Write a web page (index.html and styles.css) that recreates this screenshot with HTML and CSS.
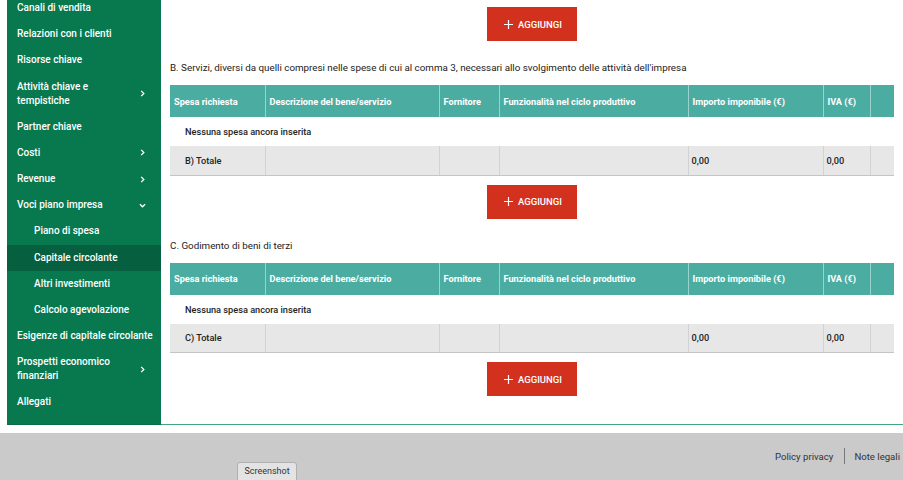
FILE: index.html
```html
<!DOCTYPE html>
<html lang="it">
<head>
    <meta charset="UTF-8">
    <title>Piano di spesa - Capitale circolante</title>
    <link rel="stylesheet" href="styles.css">
</head>
<body>
    <div class="page">
        <nav class="sidebar">
            <ul class="menu">
                <li class="menu-item">Canali di vendita</li>
                <li class="menu-item">Relazioni con i clienti</li>
                <li class="menu-item">Risorse chiave</li>
                <li class="menu-item has-sub"><span>Attività chiave e<br>tempistiche</span><svg class="chev" viewBox="0 0 8 8"><path d="M2.5 1 L5.5 4 L2.5 7"/></svg></li>
                <li class="menu-item">Partner chiave</li>
                <li class="menu-item has-sub"><span>Costi</span><svg class="chev" viewBox="0 0 8 8"><path d="M2.5 1 L5.5 4 L2.5 7"/></svg></li>
                <li class="menu-item has-sub"><span>Revenue</span><svg class="chev" viewBox="0 0 8 8"><path d="M2.5 1 L5.5 4 L2.5 7"/></svg></li>
                <li class="menu-item has-sub"><span>Voci piano impresa</span><svg class="chev" viewBox="0 0 8 8"><path d="M1 2.5 L4 5.5 L7 2.5"/></svg></li>
                <li class="menu-item sub">Piano di spesa</li>
                <li class="menu-item sub active">Capitale circolante</li>
                <li class="menu-item sub">Altri investimenti</li>
                <li class="menu-item sub">Calcolo agevolazione</li>
                <li class="menu-item">Esigenze di capitale circolante</li>
                <li class="menu-item has-sub"><span>Prospetti economico<br>finanziari</span><svg class="chev" viewBox="0 0 8 8"><path d="M2.5 1 L5.5 4 L2.5 7"/></svg></li>
                <li class="menu-item">Allegati</li>
            </ul>
        </nav>

        <main class="content">
            <div class="add-bar"><button class="btn-add"><svg class="plus" viewBox="0 0 9 9"><path d="M4.5 0 V9 M0 4.5 H9"/></svg>AGGIUNGI</button></div>

            <p class="section-title">B. Servizi, diversi da quelli compresi nelle spese di cui al comma 3, necessari allo svolgimento delle attività dell'impresa</p>
            <table class="spese">
                <colgroup>
                    <col style="width:95px"><col style="width:174px"><col style="width:60px"><col style="width:189px"><col style="width:135px"><col style="width:47px"><col>
                </colgroup>
                <thead>
                    <tr>
                        <th>Spesa richiesta</th>
                        <th>Descrizione del bene/servizio</th>
                        <th>Fornitore</th>
                        <th>Funzionalità nel ciclo produttivo</th>
                        <th>Importo imponibile (€)</th>
                        <th>IVA (€)</th>
                        <th></th>
                    </tr>
                </thead>
                <tbody>
                    <tr class="empty"><td colspan="7">Nessuna spesa ancora inserita</td></tr>
                    <tr class="total">
                        <td class="label">B) Totale</td><td></td><td></td><td></td><td>0,00</td><td>0,00</td><td></td>
                    </tr>
                </tbody>
            </table>

            <div class="add-bar"><button class="btn-add"><svg class="plus" viewBox="0 0 9 9"><path d="M4.5 0 V9 M0 4.5 H9"/></svg>AGGIUNGI</button></div>

            <p class="section-title">C. Godimento di beni di terzi</p>
            <table class="spese">
                <colgroup>
                    <col style="width:95px"><col style="width:174px"><col style="width:60px"><col style="width:189px"><col style="width:135px"><col style="width:47px"><col>
                </colgroup>
                <thead>
                    <tr>
                        <th>Spesa richiesta</th>
                        <th>Descrizione del bene/servizio</th>
                        <th>Fornitore</th>
                        <th>Funzionalità nel ciclo produttivo</th>
                        <th>Importo imponibile (€)</th>
                        <th>IVA (€)</th>
                        <th></th>
                    </tr>
                </thead>
                <tbody>
                    <tr class="empty"><td colspan="7">Nessuna spesa ancora inserita</td></tr>
                    <tr class="total">
                        <td class="label">C) Totale</td><td></td><td></td><td></td><td>0,00</td><td>0,00</td><td></td>
                    </tr>
                </tbody>
            </table>

            <div class="add-bar"><button class="btn-add"><svg class="plus" viewBox="0 0 9 9"><path d="M4.5 0 V9 M0 4.5 H9"/></svg>AGGIUNGI</button></div>
        </main>
    </div>

    <footer class="footer">
        <div class="footer-links">
            <a>Policy privacy</a>
            <span class="sep"></span>
            <a>Note legali</a>
        </div>
        <button class="shot">Screenshot</button>
    </footer>
</body>
</html>
```

FILE: styles.css
```css
:root {
    --green: #08784f;
    --green-dark: #065f3e;
    --teal: #4bada2;
    --red: #d2321d;
    --grey-row: #e7e7e7;
    --footer: #cacaca;
}

* {
    box-sizing: border-box;
}

body {
    margin: 0;
    font-family: Roboto, 'Liberation Sans', sans-serif;
    color: #222;
    background: #fff;
    height: 480px;
    overflow: hidden;
}

.page {
    display: flex;
    height: 425px;
    padding-left: 7px;
}

/* sidebar */
.sidebar {
    width: 154px;
    background-color: var(--green);
    overflow: hidden;
    border-bottom: 1px solid #0b6b47;
}

.menu {
    list-style: none;
    margin: -5px 0 0;
    padding: 0;
}

.menu-item {
    display: flex;
    align-items: center;
    justify-content: space-between;
    padding: 6px 15px 6px 10px;
    color: #fff;
    font-size: 10px;
    font-weight: 500;
    line-height: 14px;
    min-height: 26.2px;
    white-space: nowrap;
}

.menu-item.sub {
    padding-left: 27px;
}

.menu-item.active {
    background-color: var(--green-dark);
}

.chev {
    width: 7px;
    height: 7px;
    fill: none;
    stroke: #fff;
    stroke-width: 1.5;
    flex-shrink: 0;
}

/* main */
.content {
    flex: 1;
    padding: 7px 9px 0 9px;
    border-bottom: 1px solid #3fa67e;
}

.add-bar {
    display: flex;
    justify-content: center;
}

.btn-add {
    display: flex;
    align-items: center;
    justify-content: center;
    width: 90px;
    height: 34px;
    border: none;
    background-color: var(--red);
    color: #fff;
    font-family: inherit;
    font-size: 9.5px;
    font-weight: 500;
    padding: 0 0 0 2px;
}

.plus {
    width: 9px;
    height: 9px;
    fill: none;
    stroke: #fff;
    stroke-width: 1.2;
    margin-right: 5px;
}

.section-title {
    margin: 21px 0 11px;
    font-size: 9.8px;
    line-height: 12px;
}

.spese {
    width: 100%;
    table-layout: fixed;
    border-collapse: collapse;
    margin-bottom: 9px;
    font-size: 9.2px;
}

.spese th {
    background-color: var(--teal);
    color: #fff;
    font-weight: 700;
    text-align: left;
    height: 32px;
    padding: 0 4px;
    border-left: 1.5px solid #98d4cb;
    white-space: nowrap;
    overflow: hidden;
}

.spese th:first-child {
    border-left: none;
}

.spese .empty td {
    height: 29px;
    padding-left: 15px;
    font-weight: 500;
    background: #fff;
}

.spese .total td {
    height: 29px;
    background-color: var(--grey-row);
    border-left: 1px solid #d2d2d2;
    border-bottom: 1.5px solid #c4c4c4;
    padding: 0 3px;
    font-weight: 500;
}

.spese .total td:first-child {
    border-left: none;
}

.spese .total td.label {
    padding-left: 15px;
}

/* footer */
.footer {
    position: relative;
    margin-top: 8px;
    height: 47px;
    background-color: var(--footer);
}

.footer-links {
    display: flex;
    justify-content: flex-end;
    align-items: center;
    padding: 15px 3px 0 0;
    font-size: 9.6px;
    color: #333;
}

.sep {
    width: 1px;
    height: 16px;
    background: #777;
    margin: 0 9px 0 11px;
}

.shot {
    position: absolute;
    left: 237px;
    top: 29px;
    width: 60px;
    height: 22px;
    border: 1px solid #b0b0b0;
    border-radius: 3px;
    background: #e3e3e3;
    font-family: inherit;
    font-size: 9px;
    color: #333;
    padding: 0 0 4px;
}
```
